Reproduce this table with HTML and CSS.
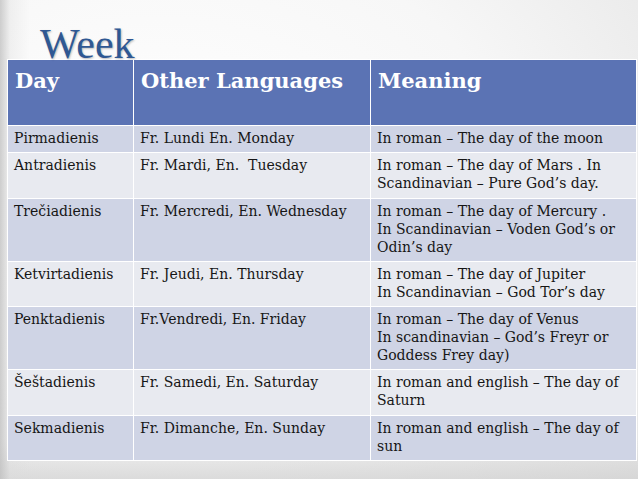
FILE: index.html
```html
<!DOCTYPE html>
<html lang="en">
<head>
<meta charset="utf-8">
<title>Week</title>
<link rel="stylesheet" href="styles.css">
</head>
<body>
<div class="slide">
  <h1 class="title">Week</h1>
  <table class="week">
    <colgroup>
      <col class="c1"><col class="c2"><col class="c3">
    </colgroup>
    <thead>
      <tr><th>Day</th><th>Other Languages</th><th>Meaning</th></tr>
    </thead>
    <tbody>
      <tr class="dark"><td>Pirmadienis</td><td>Fr. Lundi En. Monday</td><td>In roman – The day of the moon</td></tr>
      <tr class="light"><td>Antradienis</td><td>Fr. Mardi, En.&nbsp; Tuesday</td><td>In roman – The day of Mars . In<br>Scandinavian – Pure God’s day.</td></tr>
      <tr class="dark"><td>Trečiadienis</td><td>Fr. Mercredi, En. Wednesday</td><td>In roman – The day of Mercury .<br>In Scandinavian – Voden God’s or<br>Odin’s day</td></tr>
      <tr class="light"><td>Ketvirtadienis</td><td>Fr. Jeudi, En. Thursday</td><td>In roman – The day of Jupiter<br>In Scandinavian – God Tor’s day</td></tr>
      <tr class="dark"><td>Penktadienis</td><td>Fr.Vendredi, En. Friday</td><td>In roman – The day of Venus<br>In scandinavian – God’s Freyr or<br>Goddess Frey day)</td></tr>
      <tr class="light"><td>Šeštadienis</td><td>Fr. Samedi, En. Saturday</td><td>In roman and english – The day of<br>Saturn</td></tr>
      <tr class="dark"><td>Sekmadienis</td><td>Fr. Dimanche, En. Sunday</td><td>In roman and english – The day of<br>sun</td></tr>
    </tbody>
  </table>
</div>
</body>
</html>
```
FILE: styles.css
```css
html, body {
  margin: 0;
  padding: 0;
}
body {
  width: 638px;
  height: 479px;
  overflow: hidden;
  background:
    linear-gradient(to right, rgba(190,190,190,0.75) 0px, rgba(220,220,220,0.35) 10px, rgba(255,255,255,0) 30px),
    linear-gradient(to bottom, rgba(255,255,255,0) 440px, rgba(205,205,205,0.6) 479px),
    radial-gradient(ellipse 120% 110% at 25% 35%, #ffffff 0%, #f7f7f7 45%, #dedede 100%);
}
.slide {
  padding: 0 0 0 7px;
}
.title {
  margin: 0 0 0 33px;
  padding-top: 24px;
  height: 35px;
  line-height: 40px;
  font-family: "Liberation Serif", serif;
  font-weight: normal;
  font-size: 42px;
  color: #2f5893;
  text-shadow: 1px 1px 2px rgba(0,0,0,0.25);
  position: relative;
  z-index: 1;
}
.week {
  border-collapse: collapse;
  table-layout: fixed;
  width: 629px;
  font-family: "DejaVu Serif", serif;
  font-size: 14px;
  line-height: 18px;
  color: #161616;
}
.c1 { width: 126px; }
.c2 { width: 237px; }
.c3 { width: 266px; }
.week th, .week td {
  border: 1px solid #ffffff;
  text-align: left;
  vertical-align: top;
  white-space: nowrap;
}
.week th {
  background: #5b73b4;
  color: #ffffff;
  font-weight: bold;
  font-size: 21px;
  line-height: 26px;
  height: 49px;
  padding: 8px 6px 8px 7px;
}
.week td {
  padding: 3px 6px 5.3px 6px;
}
.dark td { background: #cfd4e5; }
.light td { background: #e8eaf0; }
```
